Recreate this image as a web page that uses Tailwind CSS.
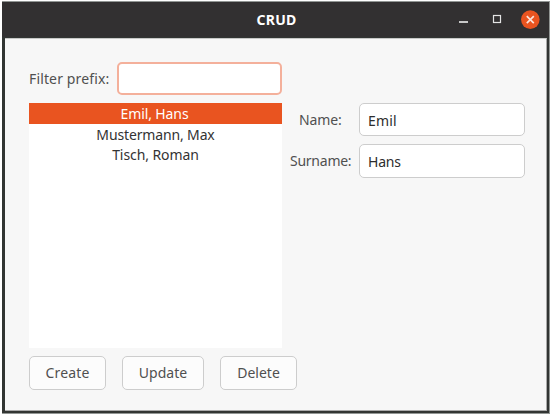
<!DOCTYPE html>
<html lang="en">
<head>
<meta charset="utf-8">
<title>CRUD</title>
<script src="https://cdn.jsdelivr.net/npm/@tailwindcss/browser@4"></script>
</head>
<body class="h-[415px] w-[550px] overflow-hidden bg-white pt-px pl-[2px] font-['Noto_Sans',sans-serif] text-[14px] leading-5 text-[#505050]">
<div class="flex h-[413px] w-[548px] flex-col border-t border-r border-b border-[#929694] bg-[#323533]">
  <header class="grid h-[35px] shrink-0 grid-cols-[1fr_auto_1fr] items-center bg-[#323031]">
    <span></span>
    <h1 class="pt-px pl-[2px] text-[14px] font-bold tracking-[0.3px] text-white">CRUD</h1>
    <div class="flex items-center justify-end pr-[9px]">
      <svg width="90" height="35" viewBox="0 0 90 35" fill="none">
        <path d="M9 20H18" stroke="#c8c8c8" stroke-width="2"/>
        <rect x="43.5" y="13.5" width="7" height="7" stroke="#e4e4e4" stroke-width="1.2"/>
        <circle cx="80.3" cy="17.6" r="9.3" fill="#e95420"/>
        <path d="M76.8 14.1l7 7M83.8 14.1l-7 7" stroke="#fbe3da" stroke-width="1.7"/>
      </svg>
    </div>
  </header>
  <main class="mt-px mr-[2px] mb-[2px] ml-[3px] flex flex-1 flex-col border-t border-r border-b border-t-[#c8c8c8] border-r-[#aaa] border-b-[#aaa] bg-[#f7f7f7] pt-[23px] pl-[24px]">
    <label class="flex h-[33px] items-center">
      <span class="w-[88px] whitespace-nowrap tracking-[0.14px]">Filter prefix:</span>
      <input class="h-[33px] w-[165px] rounded-[5px] border-2 border-[#f4b09b] bg-white px-2 outline-none">
    </label>
    <div class="mt-[8px] flex">
      <ul class="h-[245px] w-[253px] bg-white text-center text-[#333]">
        <li class="h-[20.5px] bg-[#e95420] pt-px pr-[2px] tracking-[-0.1px] text-white">Emil, Hans</li>
        <li class="h-[20.5px] pt-px tracking-[-0.14px]">Mustermann, Max</li>
        <li class="h-[20.5px] pt-px tracking-[-0.08px]">Tisch, Roman</li>
      </ul>
      <div class="ml-[8px] flex flex-col gap-[8px]">
        <label class="flex h-[33px] items-center">
          <span class="w-[69px] pl-[9px] tracking-[-0.1px]">Name:</span>
          <input value="Emil" class="h-[33px] w-[166px] rounded-[5px] border border-[#cdcdcd] bg-white px-2 pt-px tracking-[0.2px] text-[#2d2d2d]">
        </label>
        <label class="flex h-[34px] items-center">
          <span class="w-[69px] tracking-[-0.25px]">Surname:</span>
          <input value="Hans" class="h-[34px] w-[166px] rounded-[5px] border border-[#cdcdcd] bg-white px-2 tracking-[-0.2px] text-[#2d2d2d]">
        </label>
      </div>
    </div>
    <div class="mt-[8px] flex gap-[16px]">
      <button class="h-[34px] w-[77px] rounded-[5px] border border-[#cdcdcd] bg-[#fcfcfc] tracking-[0.15px]">Create</button>
      <button class="h-[34px] w-[82px] rounded-[5px] border border-[#cdcdcd] bg-[#fcfcfc]">Update</button>
      <button class="h-[34px] w-[77px] rounded-[5px] border border-[#cdcdcd] bg-[#fcfcfc]">Delete</button>
    </div>
  </main>
</div>
</body>
</html>
